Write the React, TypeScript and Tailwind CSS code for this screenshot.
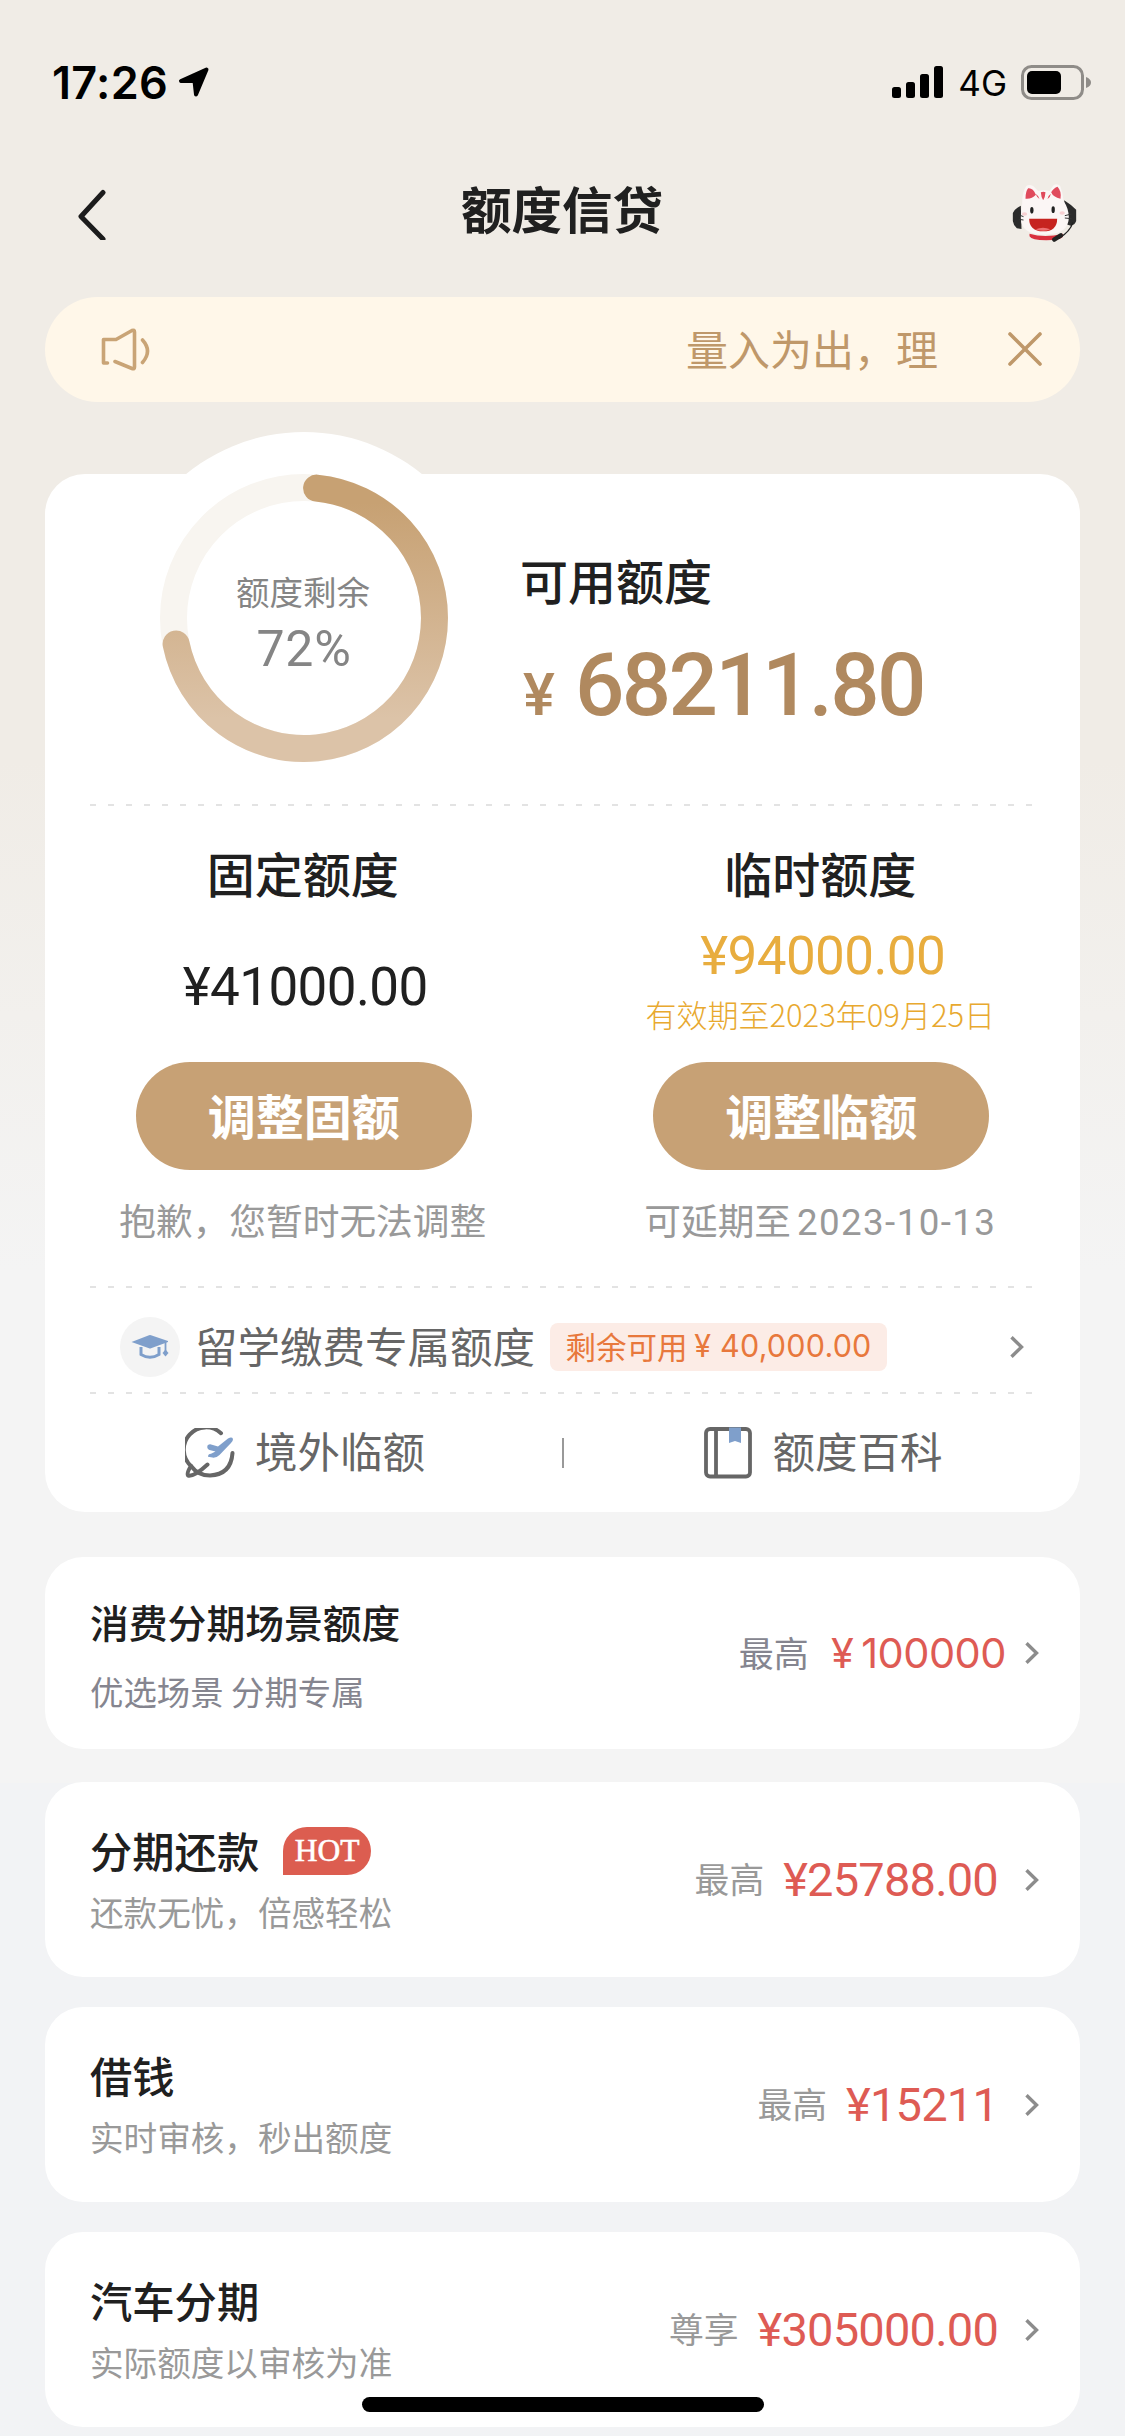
import type { ReactNode } from "react";

type Offer = {
  title: string;
  subtitle: string;
  label: string;
  amount: string;
  hot?: boolean;
};

const offers: Offer[] = [
  { title: "分期还款", subtitle: "还款无忧，倍感轻松", label: "最高", amount: "25788.00", hot: true },
  { title: "借钱", subtitle: "实时审核，秒出额度", label: "最高", amount: "15211" },
  { title: "汽车分期", subtitle: "实际额度以审核为准", label: "尊享", amount: "305000.00" },
];

const ChevronRight = () => (
  <svg width="14" height="22" viewBox="0 0 14 22" fill="none" stroke="#8c8c8c" strokeWidth="3.4">
    <path d="M1.5 1.2 11.5 11 1.5 20.8" />
  </svg>
);

const Dashes = () => (
  <div className="mx-[45px] h-[2px] shrink-0 bg-[repeating-linear-gradient(90deg,#e3e3e3_0_6px,transparent_6px_18px)]" />
);

function StatusBar() {
  return (
    <div className="flex h-[164px] items-center justify-between pr-[34px] pl-[52px]">
      <div className="flex items-center">
        <span className="font-['Inter',sans-serif] text-[45px] leading-none font-semibold tracking-[0.300px] text-black">17:26</span>
        <svg className="ml-[10px]" width="32" height="32" viewBox="0 0 32 32" fill="#000" stroke="#000" strokeWidth="4" strokeLinejoin="round">
          <path d="M28.500 3.500 3 15h13.500L18 28.500z" />
        </svg>
      </div>
      <div className="flex items-center">
        <svg width="52" height="32" viewBox="0 0 52 32" fill="#000">
          <rect x="0" y="21" width="9" height="11" rx="2.500" />
          <rect x="14" y="16" width="9" height="16" rx="2.500" />
          <rect x="28" y="8" width="9" height="24" rx="2.500" />
          <rect x="42" y="0" width="9" height="32" rx="2.500" />
        </svg>
        <span className="mt-[2px] ml-[14px] font-['Inter',sans-serif] text-[35px] leading-none text-black">4G</span>
        <svg className="ml-[14px]" width="70" height="35" viewBox="0 0 70 35">
          <rect x="1.500" y="1.500" width="60" height="32" rx="9" fill="none" stroke="#8f8c88" strokeWidth="3" />
          <rect x="6" y="6" width="34" height="23" rx="5" fill="#000" />
          <path d="M65 12q5 2 5 5.500t-5 5.500z" fill="#8f8c88" />
        </svg>
      </div>
    </div>
  );
}

// Customer service cat with a headset
const Mascot = () => (
  <svg width="65" height="60" viewBox="96 70 194 180">
    <path d="M122 138Q104 146 98 160v24q2 14 12 22l14 2zM252 122Q274 136 288 150v34q-4 12-16 14l-14-4z" fill="#2b2b2b" />
    <path d="M148 222q46 14 100 0v10q-10 10-50 10-44 0-50-12z" fill="#d9303e" />
    <path d="M126 132Q126 96 138 80q8-8 22 0l14 14q18-5 34 0l12-17q10-8 20 2 8 20 10 44 16 24 16 50 0 52-74 52-70 0-70-50 0-22 4-43z" fill="#fbf6f5" />
    <path d="M136 117q0-22 8-31 14-2 23 19-12 14-31 12zM213 98q8-14 19-17 13 14 9 36-22-4-28-19zM182 98q8-4 14 0-1 16-7 24-6-8-7-24zM166 102q10 6 12 16-8-6-12-16zM212 102q-9 6-10 16 9-6 10-16z" fill="#e04a5c" />
    <ellipse cx="155" cy="152" rx="5" ry="10" fill="#222" />
    <ellipse cx="219" cy="150" rx="5" ry="10" fill="#222" />
    <ellipse cx="133" cy="163" rx="8" ry="5" fill="#f8d0d2" />
    <ellipse cx="246" cy="160" rx="8" ry="5" fill="#f8d0d2" />
    <path d="M147 177h84q0 38-42 38-42-1-42-38z" fill="#c6231f" />
    <path d="M166 209q23-9 44 0-19 9-44 0z" fill="#ee7072" />
    <path d="M117 166l13 5m-14 8 14 2m124-13 20-5m-20 12 20 2" stroke="#333" strokeWidth="3" fill="none" />
    <path d="M278 188q-8 28-42 48" stroke="#222" strokeWidth="4" fill="none" />
    <path d="M222 240l20-13" stroke="#222" strokeWidth="13" strokeLinecap="round" />
  </svg>
);

function QuotaRing() {
  return (
    <div className="relative h-[288px] w-[288px]">
      <div className="absolute -inset-[42px] rounded-full bg-white" />
      <svg className="absolute inset-0" width="288" height="288" viewBox="0 0 288 288" fill="none" strokeWidth="27">
        <defs>
          <linearGradient id="ring" x1="0" y1="0" x2="0" y2="288" gradientUnits="userSpaceOnUse">
            <stop offset="0.1" stopColor="#c7a173" />
            <stop offset="0.85" stopColor="#dcc3a8" />
          </linearGradient>
        </defs>
        <circle cx="144" cy="144" r="130.500" stroke="#f8f5f0" />
        <path d="M156.600 14.100A130.500 130.500 0 1 1 16.100 170" stroke="url(#ring)" strokeLinecap="round" />
      </svg>
      <div className="relative flex h-full flex-col items-center pt-[96px] text-[#858585]">
        <p className="-ml-[2px] text-[33.500px] leading-[42px]">额度剩余</p>
        <p className="mt-[12px] font-['Roboto',sans-serif] text-[50px] leading-[50px] tracking-[0.800px]">72%</p>
      </div>
    </div>
  );
}

function QuotaColumn({ title, button, note, children }: { title: string; button: string; note: ReactNode; children: ReactNode }) {
  return (
    <div className="flex flex-col items-center pt-[36px]">
      <h2 className="-ml-[2px] text-[48px] leading-[60px] font-medium text-[#202020]">{title}</h2>
      <div className="flex h-[160px] flex-col items-center">{children}</div>
      <button className="h-[108px] w-[336px] rounded-full bg-[#c7a175] pb-[4px] text-[48px] leading-none font-bold text-white">{button}</button>
      <p className="mt-[24px] -ml-[2px] text-[36.700px] leading-[50px] whitespace-nowrap text-[#999]">{note}</p>
    </div>
  );
}

function QuotaCard() {
  return (
    <section className="mx-[45px] mt-[72px] flex h-[1038px] shrink-0 flex-col rounded-[40px] bg-white">
      <div className="flex h-[330px] pl-[115px]">
        <QuotaRing />
        <div className="relative ml-[72px] pt-[75px]">
          <h2 className="text-[48px] leading-[60px] font-medium text-[#202020]">可用额度</h2>
          <p className="mt-[36px] flex items-baseline font-['Roboto',sans-serif] leading-[80px] font-medium text-[#b0895f]">
            <span className="w-[55px] pl-[3px] text-[60px]">¥</span>
            <span className="text-[87px] tracking-[-2.700px]">68211.80</span>
          </p>
        </div>
      </div>
      <Dashes />
      <div className="grid h-[480px] grid-cols-2">
        <QuotaColumn title="固定额度" button="调整固额" note="抱歉，您暂时无法调整">
          <p className="mt-[55px] ml-[3px] font-['Roboto',sans-serif] text-[53px] leading-[60px] tracking-[-0.600px] text-[#202020]">¥41000.00</p>
        </QuotaColumn>
        <QuotaColumn
          title="临时额度"
          button="调整临额"
          note={
            <>
              可延期至<span className="ml-[6px] font-['Roboto',sans-serif] tracking-[1.400px]">2023-10-13</span>
            </>
          }
        >
          <p className="mt-[24px] ml-[3px] font-['Roboto',sans-serif] text-[53px] leading-[60px] tracking-[-0.600px] text-[#e8ad3e]">¥94000.00</p>
          <p className="mt-[8px] -ml-[2px] text-[31px] leading-[40px] font-light whitespace-nowrap text-[#e8a92f]">有效期至2023年09月25日</p>
        </QuotaColumn>
      </div>
      <Dashes />
      <div className="flex h-[104px] items-center pt-[14px] pr-[56px] pl-[75px]">
        <div className="flex h-[60px] w-[60px] items-center justify-center rounded-full bg-[#f4f4f4]">
          <svg width="38" height="26" viewBox="0 0 38 26" fill="#7f9fcb">
            <path d="M.5 8 18 1.200q1-.4 2 0L37 7v1L20 14.200q-1 .4-2 0z" />
            <path d="M34.500 7v11" stroke="#7f9fcb" strokeWidth="1.800" />
            <path d="M34.500 15.500 37.500 19l-3 3.500-3-3.500z" />
            <path d="M10 13v7.500q9 5.500 18 0V13" fill="none" stroke="#7f9fcb" strokeWidth="3" />
          </svg>
        </div>
        <span className="-mt-[4px] ml-[15px] text-[42.500px] leading-none text-[#666]">留学缴费专属额度</span>
        <span className="ml-[15px] flex h-[48px] w-[337px] items-center justify-center rounded-[8px] bg-[#fcece6] pb-[1px] text-[30.500px] leading-none whitespace-pre text-[#e8783c]">
          剩余可用 <span className="font-['Inter',sans-serif] tracking-[0.200px]">¥ 40,000.00</span>
        </span>
        <span className="ml-auto">
          <ChevronRight />
        </span>
      </div>
      <Dashes />
      <div className="grid h-[118px] grid-cols-[1fr_2px_1fr] items-center text-[42.500px] leading-none text-[#666]">
        <div className="flex items-center pl-[140px]">
          <svg width="50" height="50" viewBox="0 0 50 50" fill="none" stroke="#666" strokeWidth="4" strokeLinecap="round" strokeLinejoin="round">
            <path d="M36 5.200A21.500 21.500 0 0 0 6 38q7 9.500 19 9.500 21-1 22.500-22.500" />
            <path d="M6 38Q1.500 45 3 47.500q6 1.500 19.500-11" />
            <path d="M22.500 17.500q2-2 4.500-.8l6 1.800L43 10.500q4-2 5 .5 0 2.500-2 4L34.500 27q-3 3-7 2.600l-4.500-.8q0-3 3-3l4.500-2.300-6-1.500q-3-1.500-2-4.500z" fill="#7f9fcb" stroke="none" />
          </svg>
          <span className="-mt-[5px] ml-[20px]">境外临额</span>
        </div>
        <div className="h-[30px] bg-[#999]" />
        <div className="flex items-center pl-[140px]">
          <svg width="48" height="52" viewBox="0 0 48 52" fill="none" stroke="#666" strokeWidth="3.800">
            <rect x="2" y="2" width="44" height="47.500" rx="4" />
            <path d="M12 2v48" />
            <path d="M25 .5h12V16l-6-2-6 2z" fill="#7f9fcb" stroke="none" />
          </svg>
          <span className="-mt-[5px] ml-[21px]">额度百科</span>
        </div>
      </div>
    </section>
  );
}

function OfferCard({ title, subtitle, label, amount, hot }: Offer) {
  return (
    <article className="mx-[45px] flex h-[195px] shrink-0 items-center justify-between rounded-[38px] bg-white pr-[41px] pl-[45px]">
      <div className="-mt-[4px]">
        <h3 className="flex items-center text-[42.300px] leading-[60px] font-medium text-[#202020]">
          {title}
          {hot ? (
            <span className="mt-[3px] ml-[24px] flex h-[48px] w-[88px] items-center justify-center rounded-[24px] rounded-bl-none bg-[#dc5d50] font-['Liberation_Serif',serif] text-[31.500px] leading-none font-normal text-white [-webkit-text-stroke:0.600px_white]">
              HOT
            </span>
          ) : null}
        </h3>
        <p className="mt-[8px] text-[33.600px] leading-[48px] text-[#999]">{subtitle}</p>
      </div>
      <div className="flex items-center">
        <span className="mr-[19px] -mt-[3px] text-[34.800px] leading-[48px] text-[#999]">{label}</span>
        <span className="mr-[27px] font-['Roboto',sans-serif] text-[47px] leading-[58px] tracking-[-0.800px] text-[#de5b54]">¥{amount}</span>
        <ChevronRight />
      </div>
    </article>
  );
}

export default function App() {
  return (
    <div className="relative flex h-[2436px] w-[1125px] flex-col overflow-hidden bg-[#f2f3f5] bg-[linear-gradient(180deg,#f0ece6_0px,#f0ece6_760px,#f4f4f4_1270px,#f4f4f4_1783px,#f2f3f5_1783px)] font-['Noto_Sans_CJK_SC',sans-serif]">
      <StatusBar />
      <header className="flex h-[98px] items-center justify-between pr-[48px] pl-[75px]">
        <svg width="37" height="54" viewBox="0 0 37 54" fill="none" stroke="#1c1c1c" strokeWidth="5" strokeLinecap="round" strokeLinejoin="round">
          <path d="M28 6.500 6 30.500 28 53" />
        </svg>
        <h1 className="-mt-[12px] text-[50.500px] leading-none font-bold text-[#202020]">额度信贷</h1>
        <Mascot />
      </header>

      <div className="mx-[45px] mt-[35px] flex h-[105px] shrink-0 items-center rounded-full bg-[#fff7e9] pr-[36px] pl-[56px] text-[#bf986a]">
        <svg className="-mt-[5px]" width="50" height="48" viewBox="0 0 50 48" fill="none" stroke="#c9a476" strokeWidth="3.600" strokeLinecap="round" strokeLinejoin="round">
          <path d="M6.500 40H2.500V16.500H15L31 7.500q2.500-1 2.500 1.500V44q0 2.500-2.500 1.500L14 38.500" />
          <path d="M41.500 17q10 11 0 22.500" />
        </svg>
        <p className="mr-[68px] -mt-[4px] ml-auto text-[42px] leading-none">量入为出，理</p>
        <svg className="-mt-[2px]" width="38" height="38" viewBox="0 0 38 38" stroke="#bf986a" strokeWidth="3.600" strokeLinecap="round">
          <path d="M4 4l30 30M34 4 4 34" />
        </svg>
      </div>

      <QuotaCard />

      <article className="mx-[45px] mt-[45px] mb-[33px] flex h-[192px] shrink-0 items-center justify-between rounded-[38px] bg-white pr-[41px] pl-[45px]">
        <div className="mt-[2px]">
          <h3 className="text-[38.800px] leading-[56px] font-medium text-[#202020]">消费分期场景额度</h3>
          <p className="mt-[18px] text-[33.400px] leading-[48px] text-[#85858f]">优选场景 分期专属</p>
        </div>
        <div className="flex items-center">
          <span className="mr-[22px] -mt-[2px] text-[35px] leading-[48px] text-[#85858f]">最高</span>
          <span className="mr-[19px] font-['Inter',sans-serif] text-[41.500px] leading-[58px] tracking-[-0.500px] text-[#de5b54]">
            ¥<span className="ml-[8px]">100000</span>
          </span>
          <ChevronRight />
        </div>
      </article>

      <div className="flex flex-col gap-[30px]">
        {offers.map((offer) => (
          <OfferCard key={offer.title} {...offer} />
        ))}
      </div>

      <div className="absolute bottom-[24px] left-[362px] h-[15px] w-[402px] rounded-full bg-black" />
    </div>
  );
}
